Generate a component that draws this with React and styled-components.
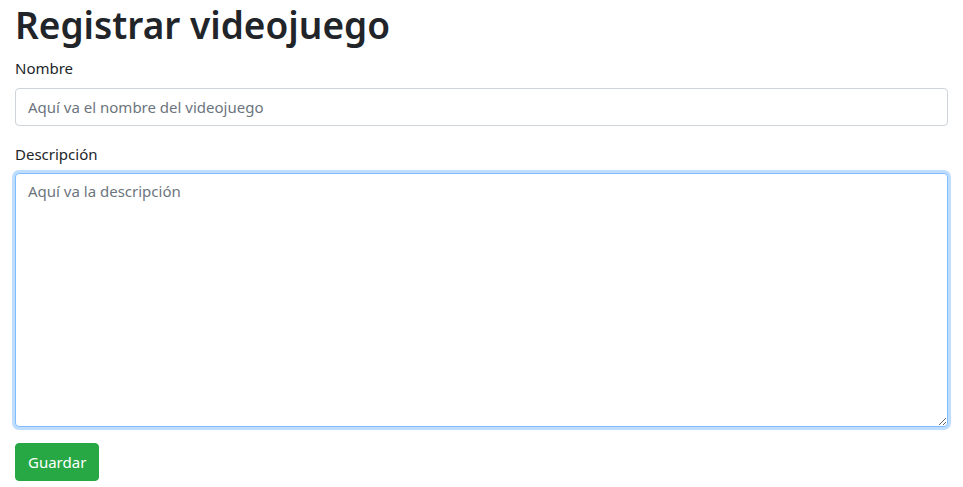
import React from 'react';
import styled, { createGlobalStyle } from 'styled-components';

const GlobalStyle = createGlobalStyle`
  * { box-sizing: border-box; }
  body {
    margin: 0;
    font-family: "Noto Sans", "Open Sans", sans-serif;
    font-size: 16px;
    line-height: 1.5;
    color: #212529;
    background: #fff;
  }
`;

const Container = styled.div`
  padding: 0 15px;
`;

const Title = styled.h1`
  margin: 0 0 8px;
  height: 48px;
  font-size: 37px;
  font-weight: 600;
  line-height: 50px;
`;

const Group = styled.div`
  margin-bottom: 16px;
`;

const Label = styled.label`
  display: inline-block;
  margin-bottom: 8px;
  font-size: 15px;
`;

const Field = styled.input`
  display: block;
  width: 100%;
  height: 38px;
  padding: 6px 12px;
  font: inherit;
  font-size: 15px;
  color: #495057;
  border: 1px solid #ced4da;
  border-radius: 4px;
  outline: none;
  &::placeholder { color: #6c757d; }
`;

const Area = styled.textarea`
  display: block;
  width: 100%;
  height: 254px;
  padding: 6px 12px;
  font: inherit;
  font-size: 15px;
  color: #495057;
  border: 1px solid #80bdff;
  border-radius: 4px;
  outline: none;
  box-shadow: 0 0 0 3px rgba(0, 123, 255, 0.25);
  &::placeholder { color: #6c757d; }
`;

const Button = styled.button`
  height: 38px;
  padding: 6px 12px;
  font: inherit;
  font-size: 15px;
  color: #fff;
  background: #28a745;
  border: 1px solid #28a745;
  border-radius: 4px;
`;

export default function App() {
  return (
    <Container>
      <GlobalStyle />
      <Title>Registrar videojuego</Title>
      <Group>
        <Label>Nombre</Label>
        <Field placeholder="Aquí va el nombre del videojuego" />
      </Group>
      <Group>
        <Label>Descripción</Label>
        <Area placeholder="Aquí va la descripción" />
      </Group>
      <Button>Guardar</Button>
    </Container>
  );
}
